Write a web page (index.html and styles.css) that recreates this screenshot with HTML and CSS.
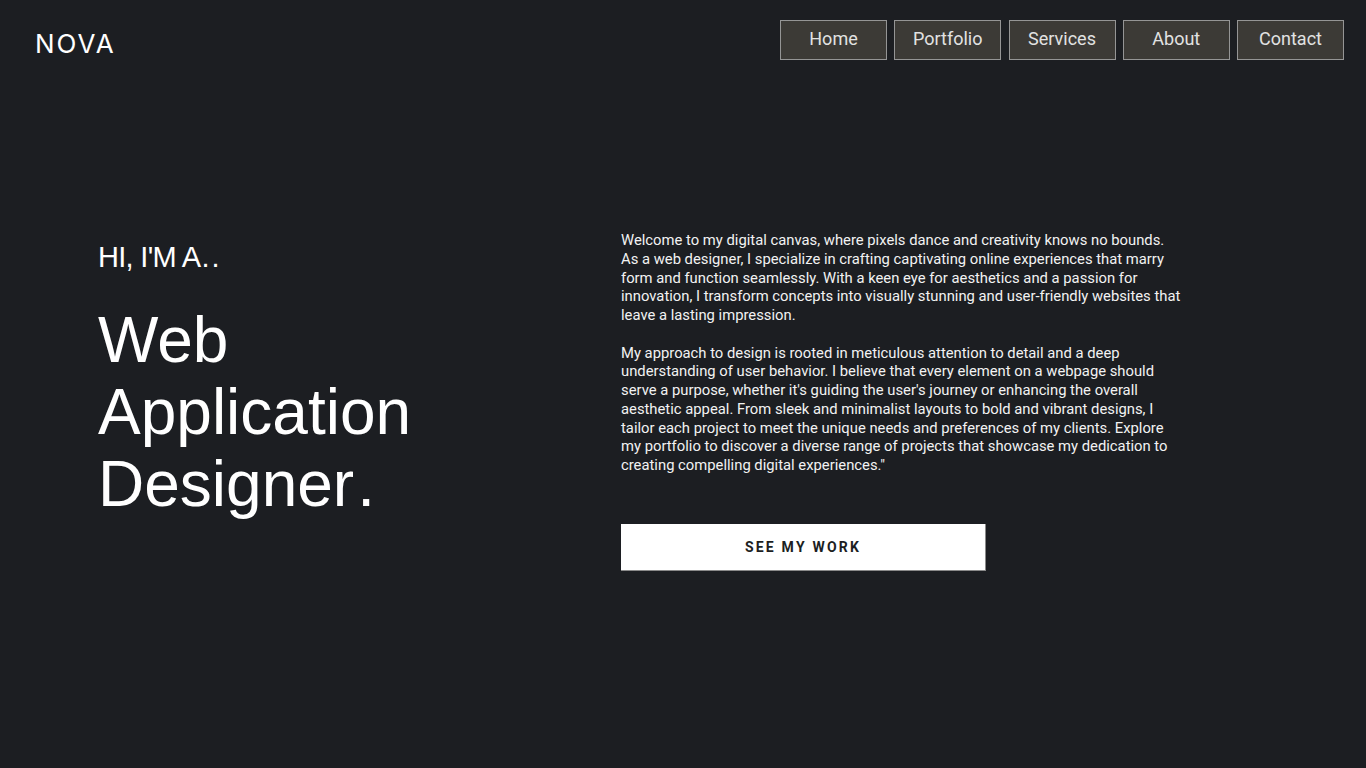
FILE: index.html
```html
<!DOCTYPE html>
<html lang="en">
<head>
<meta charset="utf-8">
<title>NOVA</title>
<link rel="stylesheet" href="styles.css">
</head>
<body>
<header class="site-header">
  <div class="logo">NOVA</div>
  <nav class="nav">
    <a class="nav-btn" href="#">Home</a>
    <a class="nav-btn" href="#">Portfolio</a>
    <a class="nav-btn" href="#">Services</a>
    <a class="nav-btn" href="#">About</a>
    <a class="nav-btn" href="#">Contact</a>
  </nav>
</header>
<main class="hero">
  <section class="hero-left">
    <h3 class="intro">HI, I'M A<span class="dots">..</span></h3>
    <h1 class="title">Web<br>Application<br>Designer<span class="dot">.</span></h1>
  </section>
  <section class="hero-right">
    <p class="text">Welcome to my digital canvas, where pixels dance and creativity knows no bounds. As a web designer, I specialize in crafting captivating online experiences that marry form and function seamlessly. With a keen eye for aesthetics and a passion for innovation, I transform concepts into visually stunning and user-friendly websites that leave a lasting impression.</p>
    <p class="text">My approach to design is rooted in meticulous attention to detail and a deep understanding of user behavior. I believe that every element on a webpage should serve a purpose, whether it's guiding the user's journey or enhancing the overall aesthetic appeal. From sleek and minimalist layouts to bold and vibrant designs, I tailor each project to meet the unique needs and preferences of my clients. Explore my portfolio to discover a diverse range of projects that showcase my dedication to creating compelling digital experiences."</p>
    <a class="cta" href="#">SEE MY WORK</a>
  </section>
</main>
</body>
</html>
```
FILE: styles.css
```css
* { box-sizing: border-box; }
html, body { height: 100%; }
body {
  margin: 0;
  background: #1c1e22;
  color: #ffffff;
  font-family: Roboto, "Liberation Sans", Arial, sans-serif;
}
.site-header {
  display: flex;
  justify-content: space-between;
  align-items: flex-start;
  padding: 20px 22px 0 35px;
}
.logo {
  font-family: Inter, Roboto, sans-serif;
  font-size: 26px;
  font-weight: 400;
  letter-spacing: 2px;
  line-height: 48px;
  color: #ffffff;
}
.nav {
  display: flex;
  gap: 7.25px;
}
.nav-btn {
  display: flex;
  align-items: center;
  justify-content: center;
  width: 107px;
  height: 40px;
  padding-bottom: 4px;
  background: #3c3a36;
  border: 1px solid #959595;
  color: #e2e2e2;
  font-size: 18px;
  text-decoration: none;
}
.hero {
  display: grid;
  grid-template-columns: 523px 562px;
  padding-left: 98px;
  margin-top: 163px;
}
.intro {
  margin: 10px 0 0 0;
  font-family: "Liberation Sans", Arial, sans-serif;
  font-weight: 400;
  font-size: 29px;
  letter-spacing: -0.7px;
  line-height: 32px;
}
.dots {
  letter-spacing: 2px;
  margin-left: 1px;
}
.title {
  margin: 31px 0 0 0;
  font-family: "Liberation Sans", Arial, sans-serif;
  font-weight: 400;
  font-size: 64px;
  line-height: 72px;
}
.dot {
  margin-left: 3px;
}
.text {
  margin: 0 0 18.75px 0;
  font-size: 14.8px;
  line-height: 18.75px;
  color: #f2f2f2;
}
.cta {
  display: flex;
  align-items: center;
  justify-content: center;
  width: 365px;
  height: 47px;
  margin-top: 49px;
  background: #ffffff;
  border-right: 1px solid #8a8a8a;
  border-bottom: 1px solid #8a8a8a;
  color: #1c1e22;
  font-weight: 700;
  font-size: 14px;
  letter-spacing: 2.2px;
  text-decoration: none;
}
```
